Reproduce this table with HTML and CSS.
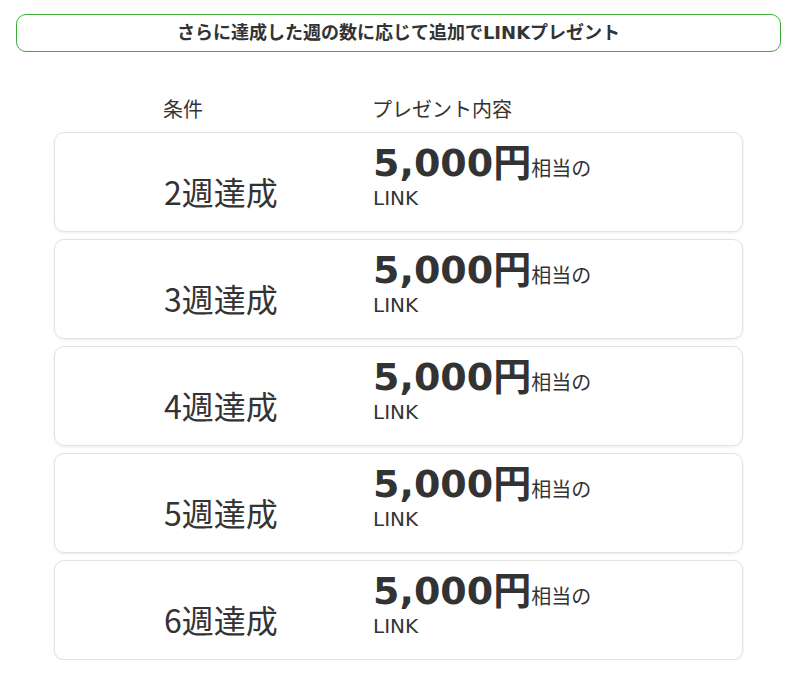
FILE: index.html
```html
<!DOCTYPE html>
<html lang="ja">
<head>
<meta charset="utf-8">
<link rel="stylesheet" href="styles.css">
</head>
<body>
<div class="banner">さらに達成した週の数に応じて追加でLINKプレゼント</div>
<div class="table">
  <div class="thead">
    <div class="th th-cond">条件</div>
    <div class="th">プレゼント内容</div>
  </div>
  <div class="card">
    <div class="cond">2週達成</div>
    <div class="gift"><div class="line1"><span class="amount">5,000円</span><span class="unit">相当の</span></div><div class="link">LINK</div></div>
  </div>
  <div class="card">
    <div class="cond">3週達成</div>
    <div class="gift"><div class="line1"><span class="amount">5,000円</span><span class="unit">相当の</span></div><div class="link">LINK</div></div>
  </div>
  <div class="card">
    <div class="cond">4週達成</div>
    <div class="gift"><div class="line1"><span class="amount">5,000円</span><span class="unit">相当の</span></div><div class="link">LINK</div></div>
  </div>
  <div class="card">
    <div class="cond">5週達成</div>
    <div class="gift"><div class="line1"><span class="amount">5,000円</span><span class="unit">相当の</span></div><div class="link">LINK</div></div>
  </div>
  <div class="card">
    <div class="cond">6週達成</div>
    <div class="gift"><div class="line1"><span class="amount">5,000円</span><span class="unit">相当の</span></div><div class="link">LINK</div></div>
  </div>
</div>
</body>
</html>
```

FILE: styles.css
```css
html, body {
  margin: 0;
  background: #fff;
}
body {
  padding: 14px 16px 0;
  font-family: "DejaVu Sans", "Noto Sans CJK JP", sans-serif;
  color: #333;
}
.banner {
  height: 36px;
  border: 1px solid #3dae35;
  border-radius: 10px;
  display: flex;
  align-items: center;
  justify-content: center;
  font-weight: bold;
  font-size: 18px;
  line-height: 1;
}
.table {
  width: 689px;
  margin: 0 auto;
  padding-top: 46px;
  display: flex;
  flex-direction: column;
  gap: 7px;
}
.thead {
  display: grid;
  grid-template-columns: 318px 1fr;
  font-size: 20px;
  line-height: 24px;
  padding-bottom: 3px;
}
.th-cond {
  padding-left: 109px;
}
.card {
  height: 98px;
  border: 1px solid #e2e2e2;
  border-radius: 10px;
  box-shadow: 0 1px 3px rgba(0,0,0,0.08);
  display: grid;
  grid-template-columns: 318px 1fr;
  align-items: start;
}
.cond {
  padding-left: 109px;
  padding-top: 38px;
  font-size: 32px;
  line-height: 40px;
  font-family: "Noto Sans CJK JP", sans-serif;
}
.gift {
  padding-top: 8px;
}
.line1 {
  line-height: 44px;
  height: 44px;
}
.amount {
  font-size: 38px;
  font-weight: bold;
}
.unit {
  font-size: 20px;
  font-family: "Noto Sans CJK JP", sans-serif;
}
.link {
  margin-top: 2px;
  font-size: 20px;
  line-height: 22px;
}
```
